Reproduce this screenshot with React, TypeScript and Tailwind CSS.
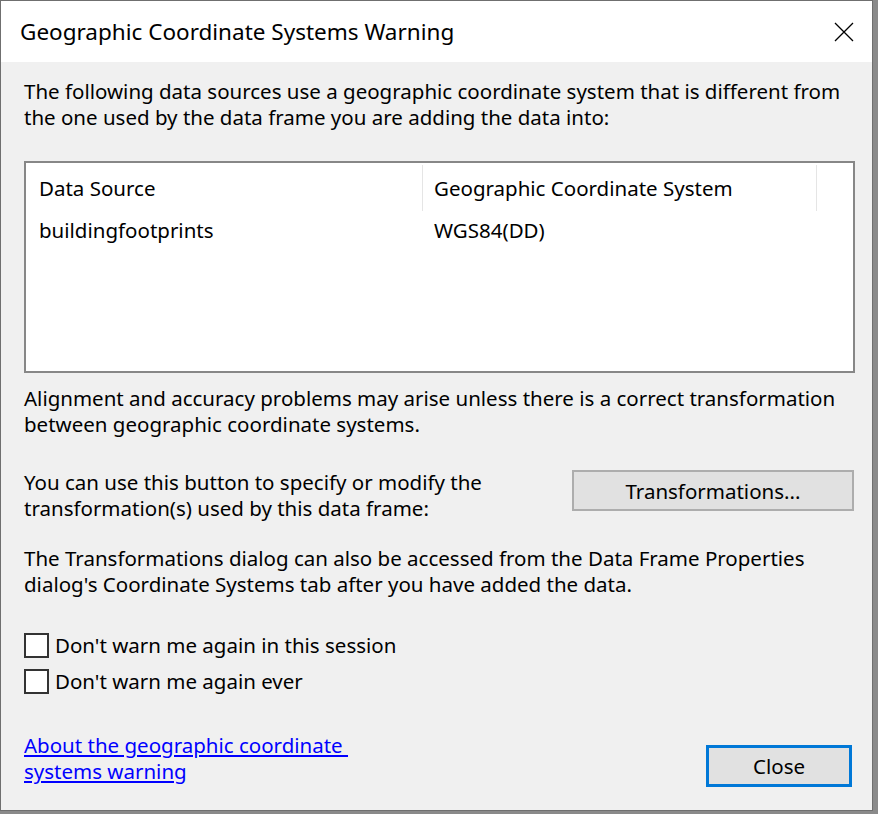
import React from "react";

const font = { fontFamily: '"Noto Sans", "Segoe UI", sans-serif' };

function Checkbox({ label }: { label: string }) {
  return (
    <div className="flex items-center h-[36px]">
      <div className="w-[25px] h-[25px] border-2 border-[#333333] bg-white shrink-0" />
      <span className="ml-[6px] text-[20.5px] leading-[26px] text-black">{label}</span>
    </div>
  );
}

export default function App() {
  return (
    <div className="w-[878px] h-[814px] bg-[#8a8a8a] relative overflow-hidden" style={font}>
      <div className="w-[873px] h-[811px] border border-[#6f6f6f] bg-[#f0f0f0] flex flex-col">
        {/* Title bar */}
        <div className="h-[61px] bg-white flex items-center justify-between shrink-0">
          <span className="ml-[19px] text-[22.5px] text-black">Geographic Coordinate Systems Warning</span>
          <svg width="20" height="20" viewBox="0 0 20 20" className="mr-[18px]">
            <path d="M1 1 L19 19 M19 1 L1 19" stroke="#000" strokeWidth="1.3" />
          </svg>
        </div>
        {/* Body */}
        <div className="flex flex-col pl-[23px] pr-[17px] pt-[16px] text-[20.5px] leading-[26px] text-black">
          <p className="whitespace-nowrap">
            The following data sources use a geographic coordinate system that is different from
            <br />
            the one used by the data frame you are adding the data into:
          </p>
          <div className="mt-[31px] h-[212px] border-2 border-[#878787] bg-white flex flex-col">
            <div className="flex h-[46px] mt-[2px] items-center">
              <div className="w-[396px] pl-[13px]">Data Source</div>
              <div className="w-px h-[46px] bg-[#e5e5e5]" />
              <div className="w-[393px] pl-[11px]">Geographic Coordinate System</div>
              <div className="w-px h-[46px] bg-[#e5e5e5]" />
            </div>
            <div className="flex h-[38px] items-center">
              <div className="w-[397px] pl-[13px]">buildingfootprints</div>
              <div className="pl-[11px]">WGS84(DD)</div>
            </div>
          </div>
          <p className="mt-[12px] whitespace-nowrap">
            Alignment and accuracy problems may arise unless there is a correct transformation
            <br />
            between geographic coordinate systems.
          </p>
          <div className="mt-[32px] flex justify-between items-start">
            <p className="whitespace-nowrap">
              You can use this button to specify or modify the
              <br />
              transformation(s) used by this data frame:
            </p>
            <button className="mt-px w-[282px] h-[41px] bg-[#e1e1e1] border-2 border-[#adadad] text-black text-[20.5px] mr-px">
              Transformations...
            </button>
          </div>
          <p className="mt-[24px] whitespace-nowrap">
            The Transformations dialog can also be accessed from the Data Frame Properties
            <br />
            dialog's Coordinate Systems tab after you have added the data.
          </p>
          <div className="mt-[30px] flex flex-col">
            <Checkbox label="Don't warn me again in this session" />
            <Checkbox label="Don't warn me again ever" />
          </div>
          <div className="mt-[33px] flex justify-between items-start">
            <a className="text-[#0000ff] underline underline-offset-2 cursor-pointer whitespace-nowrap">
              About the geographic coordinate&nbsp;
              <br />
              systems warning
            </a>
            <button className="mt-[13px] w-[146px] h-[42px] bg-[#e1e1e1] border-[3px] border-[#0078d7] text-black text-[20.5px] mr-[3px]">
              Close
            </button>
          </div>
        </div>
      </div>
    </div>
  );
}
